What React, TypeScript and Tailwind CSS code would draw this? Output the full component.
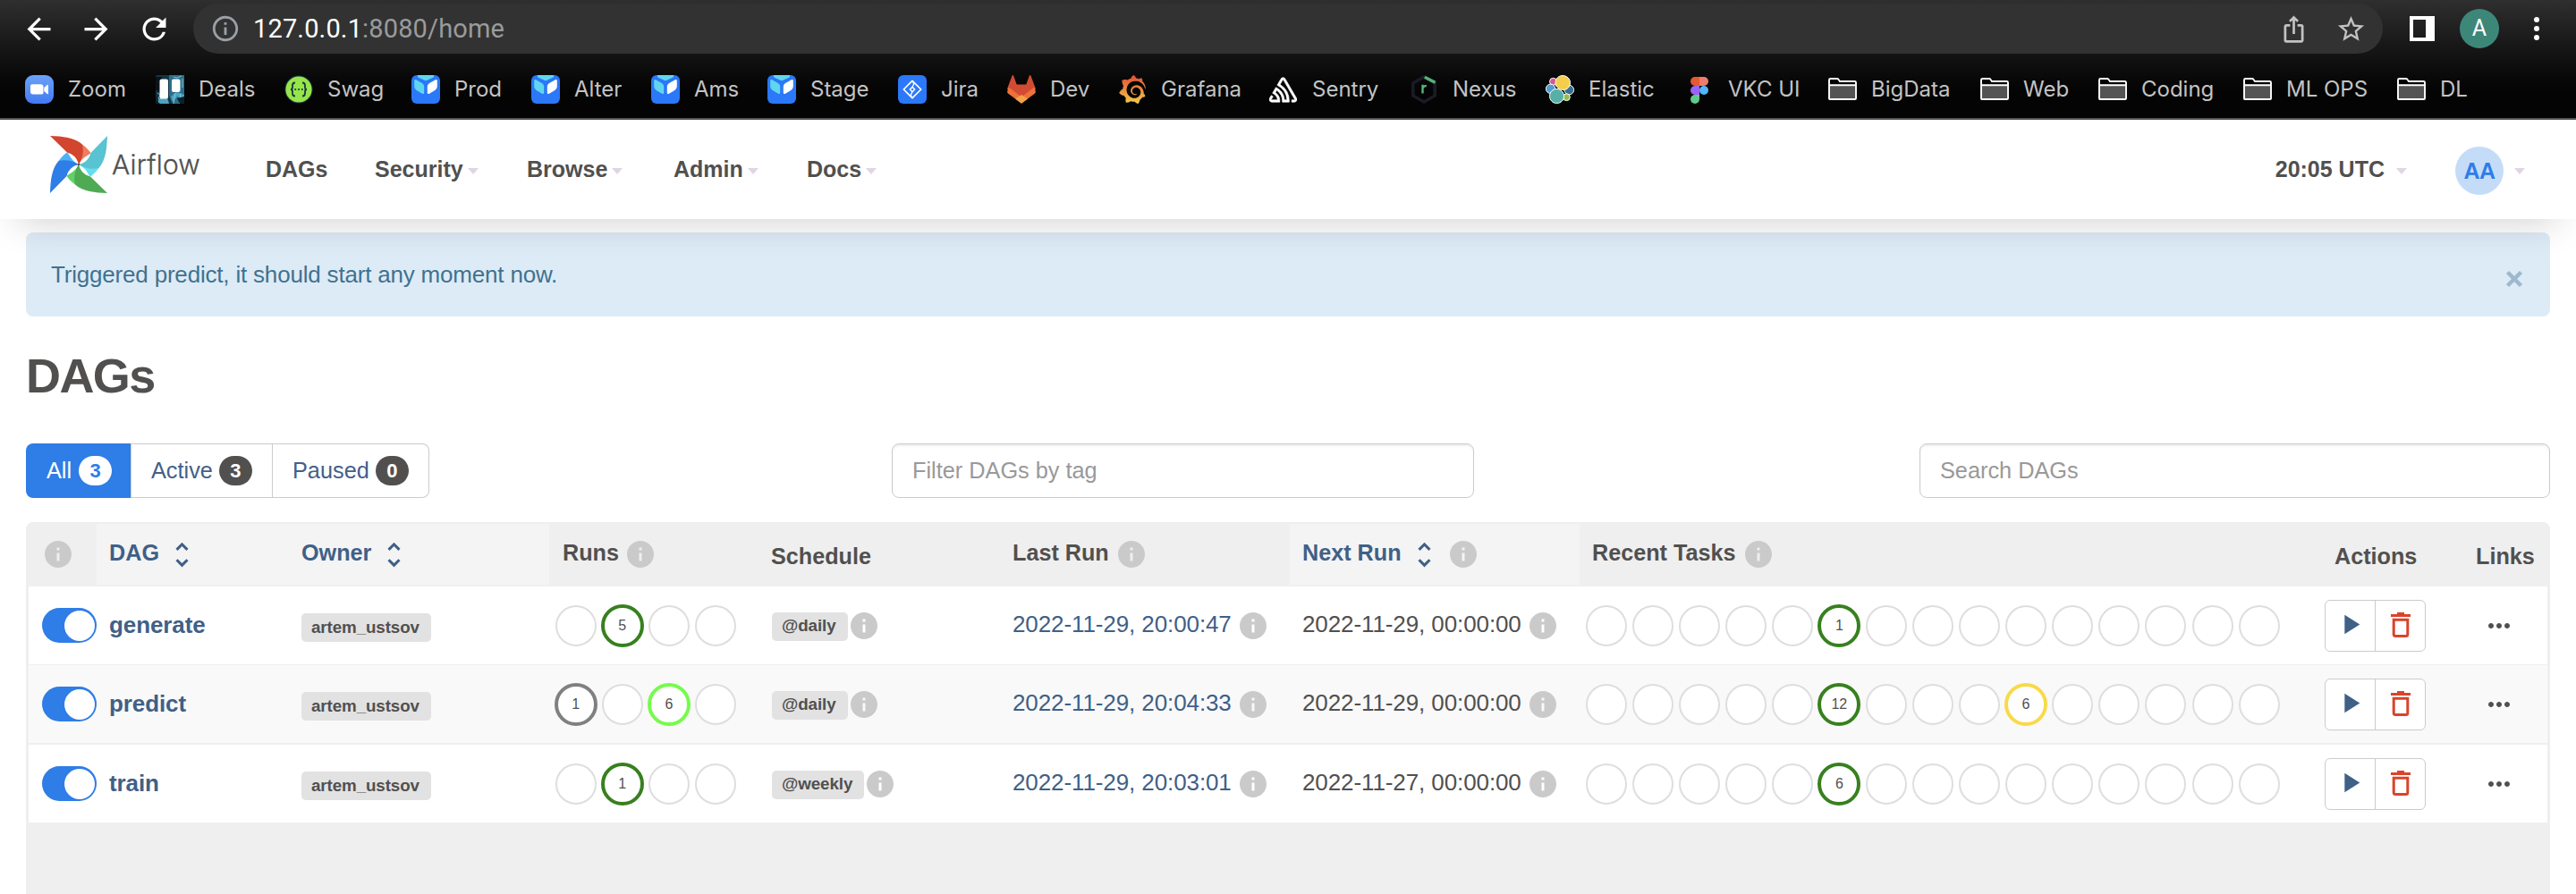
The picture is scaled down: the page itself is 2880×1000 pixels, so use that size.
import type { ReactNode } from "react";
import {
  MdArrowBack,
  MdArrowForward,
  MdInfo,
  MdInfoOutline,
  MdIosShare,
  MdMoreHoriz,
  MdPlayArrow,
  MdRefresh,
  MdStarBorder,
  MdUnfoldMore,
} from "react-icons/md";
import { SiGrafana, SiSentry } from "react-icons/si";

/* ---------- bookmark icons ---------- */

function ZoomIcon() {
  return (
    <svg viewBox="0 0 32 32" className="size-8">
      <defs>
        <linearGradient id="zoomBlue" x1="0" y1="0" x2="0" y2="1">
          <stop offset="0" stopColor="#6ba2f9" />
          <stop offset="1" stopColor="#4379f2" />
        </linearGradient>
      </defs>
      <rect width="32" height="32" rx="9" fill="url(#zoomBlue)" />
      <path d="M6 12.2c0-1.200.8-2 2-2h9.500c1.900 0 3 1.200 3 3v6.600c0 1.200-.8 1.700-2 1.700H9c-1.900 0-3-1-3-3z" fill="#fff" />
      <path d="M21.300 14l3.500-3c.6-.5 1.200-.3 1.200.5v9c0 .8-.6 1-1.200.5l-3.500-3z" fill="#fff" />
    </svg>
  );
}

function BoardIcon() {
  return (
    <svg viewBox="0 0 32 32" className="size-8">
      <rect width="32" height="32" rx="2" fill="#153544" />
      <path d="M0 2h7v12l-4 5-3-3z" fill="#0a1319" />
      <path d="M15 0h17v32H19l-4-9z" fill="#2b6f8c" />
      <path d="M17 24l6-5 9 3v4l-8-2-5 6zM2 29l6-5 5 1 2 7H5z" fill="#4ba3c0" />
      <path d="M2 20l3 2-2 5 4-1M20 2l4 1 5-2M22 20l-2 12M28 20l-1 12M30 4v10" fill="none" stroke="#8fd0e0" strokeWidth=".8" />
      <path d="M24 26l3 6h5v-8zM1 21l2 11H0z" fill="#0c212b" />
      <rect x="4.500" y="4.500" width="9.500" height="22" rx="2" fill="#fff" />
      <rect x="18" y="4.500" width="9.500" height="14.500" rx="2" fill="#fff" />
    </svg>
  );
}

function SwaggerIcon() {
  return (
    <svg viewBox="0 0 32 32" className="size-8">
      <circle cx="16" cy="16" r="15.600" fill="#173647" />
      <circle cx="16" cy="16" r="14.600" fill="#97e548" />
      <g fill="none" stroke="#173647" strokeWidth="1.800">
        <path d="M12 8.500c-2.600 0-3 1-3 3v2c0 1.600-.6 2.500-2 2.500 1.400 0 2 .9 2 2.500v2c0 2 .4 3 3 3" />
        <path d="M20 8.500c2.600 0 3 1 3 3v2c0 1.600.6 2.500 2 2.500-1.400 0-2 .9-2 2.500v2c0 2-.4 3-3 3" />
      </g>
      <g fill="#173647">
        <circle cx="12.200" cy="16" r="1.100" />
        <circle cx="16" cy="16" r="1.100" />
        <circle cx="19.800" cy="16" r="1.100" />
      </g>
    </svg>
  );
}

function CubeIcon() {
  return (
    <svg viewBox="0 0 32 32" className="size-8">
      <rect width="32" height="32" rx="6" fill="#2b78f8" />
      <path d="M7 0h18v1.500c0 .6-.4 1-1 1.300l-6.500 3c-1 .5-2 .5-3 0L8 2.800c-.6-.3-1-.7-1-1.300z" fill="#60d6ee" />
      <path d="M3.200 6.500c0-1.300.8-1.800 2-1.200l6.600 3.700c1.500.9 2.400 2.200 2.400 4v6.500c0 1.500-1 2-2.200 1.300l-5.500-3.200c-2-1.200-3.300-3-3.300-5.300z" fill="#60d6ee" />
      <path d="M28.800 6.500c0-1.300-.8-1.800-2-1.200L20.200 9c-1.500.9-2.400 2.200-2.400 4v6.500c0 1.500 1 2 2.200 1.300l5.500-3.200c2-1.200 3.300-3 3.300-5.300z" fill="#fff" />
    </svg>
  );
}

function JiraIcon() {
  return (
    <svg viewBox="0 0 32 32" className="size-8">
      <rect width="32" height="32" rx="6" fill="#2b78f8" />
      <g fill="none" stroke="#fff" strokeLinejoin="round">
        <path d="M16 6.300L25.700 16 16 25.700 6.300 16z" strokeWidth="1.700" />
        <path d="M16 13.300l2.700 2.700-2.700 2.700-2.700-2.700z" strokeWidth="1.500" />
        <path d="M16 6.500c2 2.200 2 4.500 0 6.500M16 19c-2 2.200-2 4.500 0 6.500" strokeWidth="1.300" />
      </g>
    </svg>
  );
}

function GitlabIcon() {
  return (
    <svg viewBox="0 0 32 32" className="size-8">
      <path d="M5.600.6c.3-.7 1.200-.7 1.500 0L10.700 10.500h10.600L24.900.6c.3-.7 1.200-.7 1.500 0L32 15.500 16 31.500 0 15.500z" fill="#d14b33" />
      <path d="M1.700 13.500L16 24.500l14.300-11 1.500 4.500c.2 1-.1 2-1 2.700L16 31.500 1.200 20.700c-.9-.7-1.200-1.700-1-2.700z" fill="#ed7139" />
      <path d="M16 22l7 4.500-6.200 4.700a1.400 1.400 0 01-1.600 0L9 26.500z" fill="#f2a247" />
    </svg>
  );
}

function GrafanaIcon() {
  return (
    <>
      <svg className="absolute size-0">
        <defs>
          <linearGradient id="grafanaWarm" x1="0" y1="0" x2="0" y2="1">
            <stop offset="0.100" stopColor="#e25a37" />
            <stop offset="1" stopColor="#f3cb4a" />
          </linearGradient>
        </defs>
      </svg>
      <SiGrafana size={32} fill="url(#grafanaWarm)" />
    </>
  );
}

function NexusIcon() {
  return (
    <svg viewBox="0 0 32 32" className="size-8">
      <path d="M16 2l12.200 7v14L16 30 3.800 23V9z" fill="none" stroke="#191c26" strokeWidth="3.600" />
      <path d="M16.800 2.300L28.600 8.200" stroke="#56b27b" strokeWidth="3.400" />
      <path d="M14.500 10.800v9.800M14.800 14.600c.4-2 1.800-2.800 4-2.400" fill="none" stroke="#56b27b" strokeWidth="2.400" />
    </svg>
  );
}

function ElasticIcon() {
  return (
    <svg viewBox="0 0 32 32" className="size-8">
      <g stroke="#fff" strokeWidth="1">
        <circle cx="8.500" cy="7.300" r="4" fill="#d6578f" />
        <circle cx="5.600" cy="15.300" r="5.200" fill="#4f9fd0" />
        <circle cx="26.300" cy="16.600" r="5.300" fill="#376f92" />
        <circle cx="23.400" cy="24.700" r="3.900" fill="#92bf4a" />
        <path d="M11 9c0-5 3.500-8.500 8-8.500s8.500 3.500 8.500 8-3.500 8-7.500 8c-4.500 0-9-3-9-7.500z" fill="#f4ce4a" />
        <path d="M4.500 23.500c0-4.500 3.500-8 8-8 4 0 8 3.500 8 8s-3.500 8-8 8-8-3.500-8-8z" fill="#57b0a7" />
      </g>
    </svg>
  );
}

function FigmaIcon() {
  return (
    <svg viewBox="0 0 32 32" className="size-8">
      <path d="M16 2h-5a5 5 0 000 10h5z" fill="#e45a33" />
      <path d="M16 2h5a5 5 0 010 10h-5z" fill="#ef7c6c" />
      <path d="M16 12h-5a5 5 0 000 10h5z" fill="#9a63f7" />
      <circle cx="21" cy="17" r="5" fill="#53b5fb" />
      <path d="M16 22h-5a5 5 0 105 5z" fill="#5fca89" />
    </svg>
  );
}

function FolderIcon() {
  return (
    <svg viewBox="0 0 32 32" className="size-8">
      <path d="M1 27V5.500C1 4.500 1.500 4 2.500 4h7.300c.8 0 1.200.2 1.600.8L13 7h16.500c1 0 1.500.5 1.500 1.500V26c0 .7-.3 1-1 1z" fill="#000" />
      <path d="M2 12h28v14H2z" fill="#545454" />
      <path d="M1 26V5.500C1 4.500 1.500 4 2.500 4h7.300c.8 0 1.200.2 1.600.8L13 7h16.500c1 0 1.500.5 1.500 1.500V26c0 .7-.3 1-1 1H2c-.7 0-1-.3-1-1zM1 11.200h30" fill="none" stroke="#fff" strokeWidth="1.900" />
    </svg>
  );
}

/* ---------- browser chrome ---------- */

const bookmarks: { label: string; icon: ReactNode; width: string }[] = [
  { label: "Zoom", icon: <ZoomIcon />, width: "w-[146px]" },
  { label: "Deals", icon: <BoardIcon />, width: "w-[144px]" },
  { label: "Swag", icon: <SwaggerIcon />, width: "w-[142px]" },
  { label: "Prod", icon: <CubeIcon />, width: "w-[134px]" },
  { label: "Alter", icon: <CubeIcon />, width: "w-[134px]" },
  { label: "Ams", icon: <CubeIcon />, width: "w-[130px]" },
  { label: "Stage", icon: <CubeIcon />, width: "w-[146px]" },
  { label: "Jira", icon: <JiraIcon />, width: "w-[122px]" },
  { label: "Dev", icon: <GitlabIcon />, width: "w-[124px]" },
  { label: "Grafana", icon: <GrafanaIcon />, width: "w-[169px]" },
  { label: "Sentry", icon: <SiSentry size={31} color="#fff" stroke="#fff" strokeWidth={0.5} className="mr-px" />, width: "w-[157px]" },
  { label: "Nexus", icon: <NexusIcon />, width: "w-[152px]" },
  { label: "Elastic", icon: <ElasticIcon />, width: "w-[156px]" },
  { label: "VKC UI", icon: <FigmaIcon />, width: "w-[160px]" },
  { label: "BigData", icon: <FolderIcon />, width: "w-[170px]" },
  { label: "Web", icon: <FolderIcon />, width: "w-[132px]" },
  { label: "Coding", icon: <FolderIcon />, width: "w-[162px]" },
  { label: "ML OPS", icon: <FolderIcon />, width: "w-[172px]" },
  { label: "DL", icon: <FolderIcon />, width: "w-[100px]" },
];

function BrowserChrome() {
  return (
    <div className="flex h-[134px] flex-col border-b-2 border-[#555] bg-linear-to-b from-[#2f2f2f] to-[#040404] to-[78%]">
      <div className="flex h-16 items-center">
        <div className="flex w-[216px] shrink-0 items-center pl-6 text-white">
          <MdArrowBack size={39} />
          <MdArrowForward size={39} className="ml-[25px]" />
          <MdRefresh size={39} className="ml-[26px]" />
        </div>
        <div className="flex h-14 w-[2448px] items-center rounded-full bg-[#323232] pl-[19px] pr-[18px]">
          <MdInfoOutline size={34} color="#9aa0a6" />
          <span className="ml-3.5 font-['Roboto'] text-[29px] leading-8 tracking-[0.150px] text-[#9b9b9b]">
            <span className="text-white">127.0.0.1</span>:8080/home
          </span>
          <div className="ml-auto flex items-center text-[#c2c2c2]">
            <MdIosShare size={33} />
            <MdStarBorder size={35} className="ml-[30px]" />
          </div>
        </div>
        <div className="ml-[30px] size-7 border-y-4 border-l-4 border-r-[10px] border-white" />
        <div className="ml-7 flex size-11 items-center justify-center rounded-full bg-[#3d8779] font-['Roboto'] text-[25px] text-white">A</div>
        <div className="ml-[39px] flex flex-col gap-1">
          <i className="size-1.5 rounded-full bg-white" />
          <i className="size-1.5 rounded-full bg-white" />
          <i className="size-1.5 rounded-full bg-white" />
        </div>
      </div>
      <div className="mt-1 flex h-16 items-center pl-7 font-['Inter'] text-[24px] leading-8 text-[#c3c3c3]">
        {bookmarks.map((b) => (
          <div key={b.label} className={`relative flex shrink-0 items-center gap-4 whitespace-nowrap ${b.width}`}>
            {b.icon}
            <span className="-mt-px">{b.label}</span>
          </div>
        ))}
      </div>
    </div>
  );
}

/* ---------- Airflow header ---------- */

const blades = [
  { main: "#d2452e", light: "#ef7c60", turn: 0 },
  { main: "#58c3d1", light: "#66def0", turn: 90 },
  { main: "#4faa54", light: "#62d168", turn: 180 },
  { main: "#2f7de6", light: "#4fb2f8", turn: 270 },
];

function Pinwheel() {
  return (
    <svg viewBox="0 0 64 64" className="size-16">
      {blades.map((b) => (
        <g key={b.turn} transform={`rotate(${b.turn} 32 32)`}>
          <path d="M36 9.500C41 13.500 44 16.500 45.700 19.500C39 23 34.500 26.500 32 32z" fill={b.light} />
          <path d="M0 0C14 .6 27 1.500 36 9.500C38 18 36 26 32 32C30.500 25.500 26.500 20.500 19 18.500z" fill={b.main} />
        </g>
      ))}
      <circle cx="32" cy="32" r="1.200" fill="#51504f" />
    </svg>
  );
}

function Caret({ className }: { className: string }) {
  return <i className={`size-0 border-x-[6.5px] border-t-[7px] border-x-transparent border-t-[#e0d5e3] ${className}`} />;
}

const menu = [
  { label: "DAGs", width: "w-[122px]", caret: false },
  { label: "Security", width: "w-[170px]", caret: true },
  { label: "Browse", width: "w-[164px]", caret: true },
  { label: "Admin", width: "w-[149px]", caret: true },
  { label: "Docs", width: "w-[120px]", caret: true },
];

function Header() {
  return (
    <header className="relative z-10 flex h-[111px] bg-white pl-14 text-[25px] font-bold text-[#51504f] shadow-[0_24px_40px_-20px_rgba(0,0,0,0.18)]">
      <div className="flex h-16 w-[241px] items-center pt-[36px]">
        <Pinwheel />
        <span className="ml-[5px] font-['Inter'] text-[30px] font-light leading-8 tracking-[0.200px] [-webkit-text-stroke:0.3px_#51504f]">Airflow</span>
      </div>
      <nav className="flex items-center">
        {menu.map((m) => (
          <div key={m.label} className={`flex items-center ${m.width}`}>
            {m.label}
            {m.caret && <Caret className="ml-[5px] mt-1" />}
          </div>
        ))}
      </nav>
      <div className="ml-auto flex items-center pr-[57px]">
        20:05 UTC
        <Caret className="ml-[13px] mt-1" />
        <div className="ml-[54px] mt-[3px] flex size-[54px] items-center justify-center rounded-full bg-[#c5dcf9] pt-0.5 text-[25px] tracking-[-0.5px] text-[#2f7de6]">AA</div>
        <Caret className="ml-3 mt-1" />
      </div>
    </header>
  );
}

/* ---------- page content ---------- */

function Tabs() {
  return (
    <div className="flex h-[61px] w-[451px] text-[25.300px] text-[#43608a]">
      <div className="flex w-[117px] items-center rounded-l-lg bg-[#2f7de6] pl-[23px] text-white">
        All
        <Count className="ml-2 bg-white text-[#2f7de6]">3</Count>
      </div>
      <div className="flex w-[159px] items-center border border-[#cbcbcb] pl-[22px]">
        Active
        <Count className="ml-[7px] bg-[#51504f] text-white">3</Count>
      </div>
      <div className="flex flex-1 items-center rounded-r-lg border border-l-0 border-[#cbcbcb] pl-[22px]">
        Paused
        <Count className="ml-[7px] bg-[#51504f] text-white">0</Count>
      </div>
    </div>
  );
}

function Count({ className, children }: { className: string; children: ReactNode }) {
  return (
    <span className={`flex h-[33px] w-[37px] items-center justify-center rounded-full text-[22px] font-bold leading-none ${className}`}>{children}</span>
  );
}

function Field({ className, placeholder }: { className: string; placeholder: string }) {
  return (
    <input
      className={`h-[61px] rounded-lg border border-[#cbcbcb] bg-white px-[22px] text-[25.300px] shadow-[inset_0_2px_2px_rgba(0,0,0,0.07)] placeholder:text-[#999] ${className}`}
      placeholder={placeholder}
    />
  );
}

function Info({ className = "" }: { className?: string }) {
  return <MdInfo size={36} color="#cacaca" className={`shrink-0 ${className}`} />;
}

function Sort() {
  return <MdUnfoldMore size={37} className="ml-[7px] shrink-0" />;
}

function TrashIcon() {
  return (
    <svg viewBox="0 0 22 28" className="h-7 w-[22px]">
      <path d="M7 0h8v2h7v3H0V2h7z" fill="#d9442b" />
      <path d="M3.200 8.200h15.600v16.300q0 2-2 2H5.200q-2 0-2-2z" fill="none" stroke="#d9442b" strokeWidth="3" />
    </svg>
  );
}

const ringColors = {
  success: "border-[#37801f]",
  queued: "border-[#808080]",
  running: "border-[#75fb4c]",
  scheduled: "border-[#f9d949]",
};
type Ring = { count: number; state: keyof typeof ringColors };

function Rings({ total, filled }: { total: number; filled: Record<number, Ring> }) {
  return (
    <div className="flex items-center">
      {Array.from({ length: total }, (_, i) => {
        const ring = filled[i];
        return (
          <div key={i} className="flex h-12 w-[52.170px] items-center justify-center">
            {ring ? (
              <div className={`flex size-12 items-center justify-center rounded-full border-4 bg-white text-[16px] leading-none ${ringColors[ring.state]}`}>
                {ring.count}
              </div>
            ) : (
              <div className="size-[46px] rounded-full border-2 border-[#dedede] bg-white" />
            )}
          </div>
        );
      })}
    </div>
  );
}

type Dag = {
  name: string;
  schedule: string;
  lastRun: string;
  nextRun: string;
  runs: Record<number, Ring>;
  tasks: Record<number, Ring>;
  look: string;
};

const dags: Dag[] = [
  {
    name: "generate",
    schedule: "@daily",
    lastRun: "2022-11-29, 20:00:47",
    nextRun: "2022-11-29, 00:00:00",
    runs: { 1: { count: 5, state: "success" } },
    tasks: { 5: { count: 1, state: "success" } },
    look: "h-[88px] border-b bg-white",
  },
  {
    name: "predict",
    schedule: "@daily",
    lastRun: "2022-11-29, 20:04:33",
    nextRun: "2022-11-29, 00:00:00",
    runs: { 0: { count: 1, state: "queued" }, 2: { count: 6, state: "running" } },
    tasks: { 5: { count: 12, state: "success" }, 9: { count: 6, state: "scheduled" } },
    look: "h-[89px] border-b-2 bg-[#f9f9f9]",
  },
  {
    name: "train",
    schedule: "@weekly",
    lastRun: "2022-11-29, 20:03:01",
    nextRun: "2022-11-27, 00:00:00",
    runs: { 1: { count: 1, state: "success" } },
    tasks: { 5: { count: 6, state: "success" } },
    look: "h-[87px] bg-white",
  },
];

const columns = "grid grid-cols-[76px_214px_292px_234px_270px_324px_324px_818px_170px_94px]";

function Tag({ children }: { children: ReactNode }) {
  return <span className="flex h-8 items-center rounded-[5px] bg-[#e2e2e2] pl-[11px] pr-[13px] text-[18.800px] font-bold">{children}</span>;
}

function TableHead() {
  return (
    <div className={`${columns} h-[72px] py-0.5 text-[25.200px] font-bold`}>
      <div className="flex items-center pl-[15px]">
        <Info />
      </div>
      <div className="flex items-center bg-[#f4f4f4] pl-3.5 text-[#3f6087]">
        <span className="-mt-0.5">DAG</span>
        <Sort />
      </div>
      <div className="flex items-center bg-[#f4f4f4] pl-[15px] text-[#3f6087]">
        <span className="-mt-0.5">Owner</span>
        <Sort />
      </div>
      <div className="flex items-center pl-[15px]">
        <span className="-mt-0.5">Runs</span>
        <Info className="ml-1.5" />
      </div>
      <div className="flex items-center pl-3.5 pt-[6px]">Schedule</div>
      <div className="flex items-center pl-3.5">
        <span className="-mt-0.5">Last Run</span>
        <Info className="ml-[7px]" />
      </div>
      <div className="flex items-center bg-[#f4f4f4] pl-3.5 text-[#3f6087]">
        <span className="-mt-0.5">Next Run</span>
        <Sort />
        <Info className="ml-[7px]" />
      </div>
      <div className="flex items-center pl-3.5">
        <span className="-mt-0.5">Recent Tasks</span>
        <Info className="ml-[7px]" />
      </div>
      <div className="flex items-center pl-[26px] pt-[6px]">Actions</div>
      <div className="flex items-center pl-3.5 pt-[6px]">Links</div>
    </div>
  );
}

function DagRow({ dag }: { dag: Dag }) {
  return (
    <div className={`${columns} items-center border-[#efefef] text-[26px] tracking-[-0.1px] ${dag.look}`}>
      <div className="pl-[15px]">
        <div className="flex h-[39px] w-[61px] items-center justify-end rounded-full bg-[#2f7de6] pr-0.5">
          <i className="size-[34px] rounded-full bg-white" />
        </div>
      </div>
      <div className="pl-3.5 font-bold text-[#3f6087]">{dag.name}</div>
      <div className="flex pl-[15px] pt-[5px]">
        <Tag>artem_ustsov</Tag>
      </div>
      <div className="pl-[3.500px]">
        <Rings total={4} filled={dag.runs} />
      </div>
      <div className="flex items-center pl-[15px]">
        <div className="pt-0.5">
          <Tag>{dag.schedule}</Tag>
        </div>
        <Info />
      </div>
      <div className="flex items-center pl-3.5 text-[#3f6087]">
        <span className="-mt-0.5">{dag.lastRun}</span>
        <Info className="ml-1.5" />
      </div>
      <div className="flex items-center pl-3.5">
        <span className="-mt-0.5">{dag.nextRun}</span>
        <Info className="ml-1.5" />
      </div>
      <div className="pl-[3.500px]">
        <Rings total={15} filled={dag.tasks} />
      </div>
      <div className="flex pl-[15px]">
        <div className="flex h-[58px] w-[113px] rounded-md border border-[#cbcbcb] bg-white">
          <div className="flex w-[56px] items-center justify-center border-r border-[#cbcbcb] pb-0.5">
            <MdPlayArrow size={37} color="#3f6087" />
          </div>
          <div className="flex flex-1 items-center justify-center pb-0.5">
            <TrashIcon />
          </div>
        </div>
      </div>
      <div className="pl-[22px]">
        <MdMoreHoriz size={36} />
      </div>
    </div>
  );
}

export default function App() {
  return (
    <div className="flex h-[1000px] w-[2880px] flex-col overflow-hidden bg-white font-['Liberation_Sans',sans-serif] text-[#51504f]">
      <BrowserChrome />
      <Header />
      <main className="flex flex-1 flex-col px-[29px] pt-[15px]">
        <div className="flex h-[94px] shrink-0 items-center rounded-lg bg-[#ddebf6] pl-7 pr-[30px] text-[26px] tracking-[-0.190px] text-[#3f7290]">
          Triggered predict, it should start any moment now.
          <svg viewBox="0 0 20 20" className="ml-auto mt-2.5 size-5">
            <path d="M2.500 2.500l15 15M17.500 2.500l-15 15" stroke="#9db9cd" strokeWidth="4.500" />
          </svg>
        </div>
        <h1 className="mt-[34px] h-16 shrink-0 text-[54px] font-bold leading-16 tracking-[-1.600px]">DAGs</h1>
        <div className="mt-[44px] flex shrink-0">
          <Tabs />
          <Field className="ml-[517px] w-[651px]" placeholder="Filter DAGs by tag" />
          <Field className="ml-auto w-[705px]" placeholder="Search DAGs" />
        </div>
        <section className="mt-[27px] flex-1 rounded-t-lg bg-[#efefef] px-[3px]">
          <TableHead />
          {dags.map((d) => (
            <DagRow key={d.name} dag={d} />
          ))}
        </section>
      </main>
    </div>
  );
}
